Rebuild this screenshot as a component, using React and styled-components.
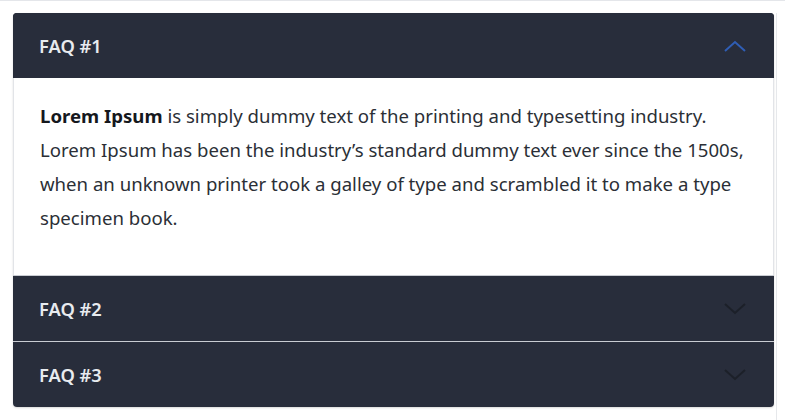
import React, {useState} from "react";
import styled, {createGlobalStyle} from "styled-components";

const GlobalStyle = createGlobalStyle`
  html, body {
    margin: 0;
    padding: 0;
    background: #ffffff;
  }
  * {
    box-sizing: border-box;
  }
`

const Page = styled.div`
  width: 785px;
  height: 420px;
  border-top: 1px solid #e4e6ea;
  padding: 12px 8px 0 13px;
  font-family: "Noto Sans", "Open Sans", sans-serif;
`
const Frame = styled.div`
  border-right: 1px solid #e6e8eb;
  padding-right: 2px;
  height: 100%;
`
const Accordion = styled.div`
  width: 761px;
  border-radius: 4px;
  overflow: hidden;
  box-shadow: 0 1px 2px rgba(0, 0, 0, 0.15);
`
const Item = styled.div`
  background: #282d3b;
  & + & {
    border-top: 1px solid #c9ccd2;
  }
`
const Header = styled.button`
  width: 100%;
  height: 65px;
  display: flex;
  align-items: center;
  justify-content: space-between;
  padding: 0 26px;
  background: #282d3b;
  border: 0;
  cursor: pointer;
  color: #e8ebef;
  font-family: inherit;
  font-size: 18.3px;
  font-weight: 600;
  text-align: left;
`
const Chevron = styled.svg`
  width: 24px;
  height: 14px;
  margin-right: 1px;
  color: ${p => p.$open ? "#2f5db4" : "#1c2029"};
`
const Body = styled.div`
  background: #ffffff;
  padding: 21px 14px 24px 26px;
  border-left: 1px solid #e2e4e8;
  border-right: 1px solid #e2e4e8;
`
const Text = styled.p`
  margin: 0 0 16px;
  font-size: 18.6px;
  line-height: 34px;
  color: #2b2f36;
  strong {
    color: #15181d;
    font-weight: 700;
  }
`

const items = [
    {title: "FAQ #1"},
    {title: "FAQ #2"},
    {title: "FAQ #3"},
]

export default function App() {
    const [open, setOpen] = useState(0);

    return (<>
            <GlobalStyle/>
            <Page>
                <Frame>
                    <Accordion>
                        {items.map((item, i) => (
                            <Item key={item.title}>
                                <Header $open={open === i} onClick={() => setOpen(open === i ? -1 : i)}>
                                    {item.title}
                                    <Chevron $open={open === i} viewBox="0 0 24 14" fill="none">
                                        {open === i
                                            ? <path d="M2 12 L12 3 L22 12" stroke="currentColor" strokeWidth="2"/>
                                            : <path d="M2 2 L12 11 L22 2" stroke="currentColor" strokeWidth="2"/>}
                                    </Chevron>
                                </Header>
                                {open === i && (
                                    <Body>
                                        <Text>
                                            <strong>Lorem Ipsum</strong> is simply dummy text of the printing and typesetting industry.<br/>
                                            Lorem Ipsum has been the industry’s standard dummy text ever since the 1500s,<br/>
                                            when an unknown printer took a galley of type and scrambled it to make a type<br/>
                                            specimen book.
                                        </Text>
                                    </Body>
                                )}
                            </Item>
                        ))}
                    </Accordion>
                </Frame>
            </Page>
        </>
    )
}
